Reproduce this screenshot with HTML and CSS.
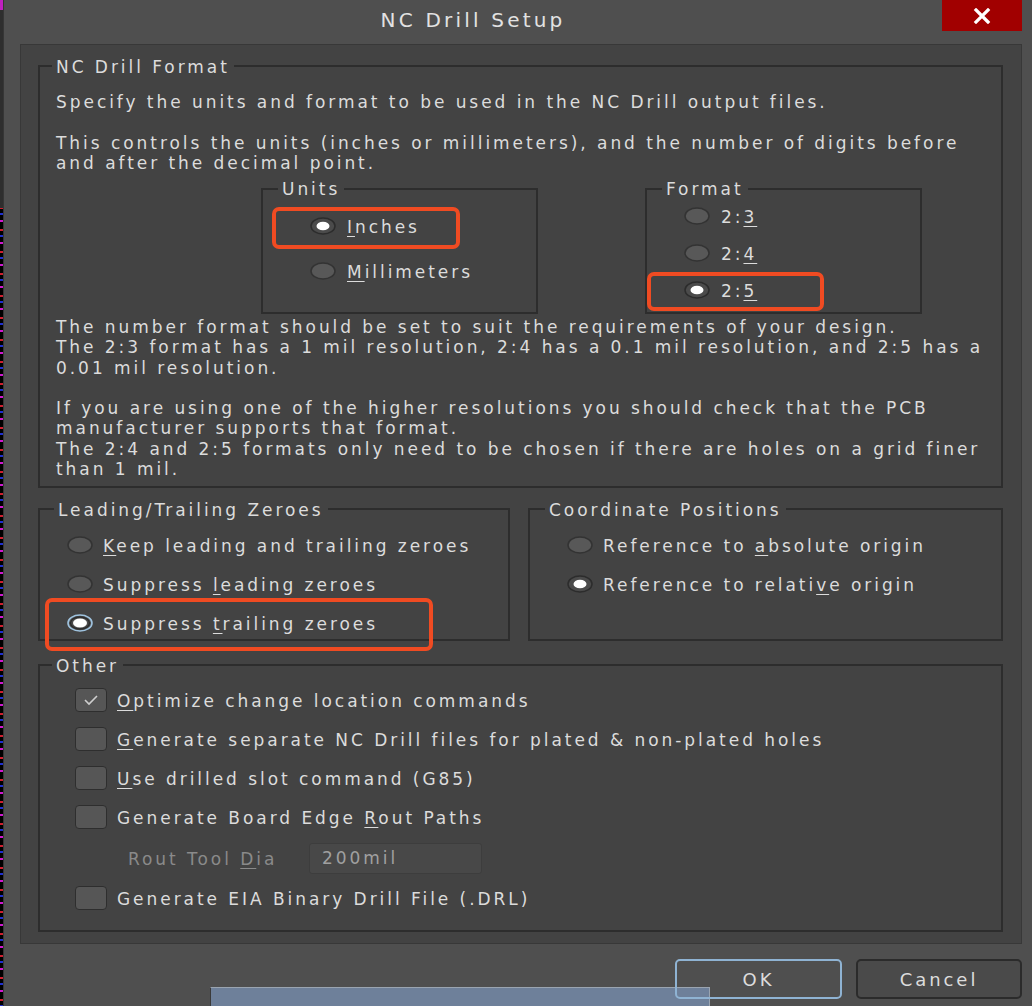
FILE: index.html
```html
<!DOCTYPE html>
<html lang="en">
<head>
<meta charset="utf-8">
<title>NC Drill Setup</title>
<link rel="stylesheet" href="styles.css">
</head>
<body>
<div class="screen">
  <div class="bgstrip"></div>
  <div class="dialog">
    <div class="titlebar">
      <div class="title">NC Drill Setup</div>
      <div class="close">
        <svg width="18" height="16" viewBox="0 0 18 16"><path d="M3 2 L15 14 M15 2 L3 14" stroke="#fff" stroke-width="3.2" stroke-linecap="square"/></svg>
      </div>
    </div>
    <div class="panel">
      <div class="group g-format">
        <span class="legend">NC Drill Format</span>
        <p>Specify the units and format to be used in the NC Drill output files.</p>
        <p class="p2">This controls the units (inches or millimeters), and the number of digits before<br>and after the decimal point.</p>
        <div class="subrow">
          <div class="group g-units">
            <span class="legend">Units</span>
            <div class="opt hl-wrap">
              <svg class="radio" viewBox="0 0 26 18"><ellipse cx="13" cy="9" rx="12" ry="8" fill="#4b4b4b" stroke="#2c2c2c" stroke-width="1.5"/><ellipse cx="13" cy="9" rx="6.5" ry="4.3" fill="#fff"/></svg>
              <span><u>I</u>nches</span>
              <span class="hl hl-inches"></span>
            </div>
            <div class="opt">
              <svg class="radio" viewBox="0 0 26 18"><ellipse cx="13" cy="9" rx="12" ry="8" fill="#585858" stroke="#333" stroke-width="1.5"/></svg>
              <span><u>M</u>illimeters</span>
            </div>
          </div>
          <div class="group g-fmt">
            <span class="legend">Format</span>
            <div class="opt">
              <svg class="radio" viewBox="0 0 26 18"><ellipse cx="13" cy="9" rx="12" ry="8" fill="#585858" stroke="#333" stroke-width="1.5"/></svg>
              <span>2:<u>3</u></span>
            </div>
            <div class="opt">
              <svg class="radio" viewBox="0 0 26 18"><ellipse cx="13" cy="9" rx="12" ry="8" fill="#585858" stroke="#333" stroke-width="1.5"/></svg>
              <span>2:<u>4</u></span>
            </div>
            <div class="opt hl-wrap">
              <svg class="radio" viewBox="0 0 26 18"><ellipse cx="13" cy="9" rx="12" ry="8" fill="#4b4b4b" stroke="#2c2c2c" stroke-width="1.5"/><ellipse cx="13" cy="9" rx="6.5" ry="4.3" fill="#fff"/></svg>
              <span>2:<u>5</u></span>
              <span class="hl hl-25"></span>
            </div>
          </div>
        </div>
        <p class="info">The number format should be set to suit the requirements of your design.<br>The 2:3 format has a 1 mil resolution, 2:4 has a 0.1 mil resolution, and 2:5 has a<br>0.01 mil resolution.<br><br>If you are using one of the higher resolutions you should check that the PCB<br>manufacturer supports that format.<br>The 2:4 and 2:5 formats only need to be chosen if there are holes on a grid finer<br>than 1 mil.</p>
      </div>

      <div class="row2">
        <div class="group g-lead">
          <span class="legend">Leading/Trailing Zeroes</span>
          <div class="opt">
            <svg class="radio" viewBox="0 0 26 18"><ellipse cx="13" cy="9" rx="12" ry="8" fill="#585858" stroke="#333" stroke-width="1.5"/></svg>
            <span><u>K</u>eep leading and trailing zeroes</span>
          </div>
          <div class="opt">
            <svg class="radio" viewBox="0 0 26 18"><ellipse cx="13" cy="9" rx="12" ry="8" fill="#585858" stroke="#333" stroke-width="1.5"/></svg>
            <span>Suppress <u>l</u>eading zeroes</span>
          </div>
          <div class="opt hl-wrap">
            <svg class="radio" viewBox="0 0 26 18"><ellipse cx="13" cy="9" rx="12" ry="8" fill="#4b4b4b" stroke="#9fc3df" stroke-width="1.6"/><ellipse cx="13" cy="9" rx="9.5" ry="6" fill="none" stroke="#2c2c2c" stroke-width="1.4"/><ellipse cx="13" cy="9" rx="7" ry="4.6" fill="#fff"/></svg>
            <span>Suppress <u>t</u>railing zeroes</span>
            <span class="hl hl-trail"></span>
          </div>
        </div>
        <div class="group g-coord">
          <span class="legend">Coordinate Positions</span>
          <div class="opt">
            <svg class="radio" viewBox="0 0 26 18"><ellipse cx="13" cy="9" rx="12" ry="8" fill="#585858" stroke="#333" stroke-width="1.5"/></svg>
            <span>Reference to <u>a</u>bsolute origin</span>
          </div>
          <div class="opt">
            <svg class="radio" viewBox="0 0 26 18"><ellipse cx="13" cy="9" rx="12" ry="8" fill="#4b4b4b" stroke="#2c2c2c" stroke-width="1.5"/><ellipse cx="13" cy="9" rx="6.5" ry="4.3" fill="#fff"/></svg>
            <span>Reference to relati<u>v</u>e origin</span>
          </div>
        </div>
      </div>

      <div class="group g-other">
        <span class="legend">Other</span>
        <div class="opt chk">
          <span class="box"><svg width="32" height="24" viewBox="0 0 32 24"><path d="M10 12 L14 16 L22 8" fill="none" stroke="#cfcfcf" stroke-width="1.6"/></svg></span>
          <span><u>O</u>ptimize change location commands</span>
        </div>
        <div class="opt chk">
          <span class="box"></span>
          <span><u>G</u>enerate separate NC Drill files for plated &amp; non-plated holes</span>
        </div>
        <div class="opt chk">
          <span class="box"></span>
          <span><u>U</u>se drilled slot command (G85)</span>
        </div>
        <div class="opt chk">
          <span class="box"></span>
          <span>Generate Board Edge <u>R</u>out Paths</span>
        </div>
        <div class="rout">
          <span class="rout-label">Rout Tool <u>D</u>ia</span>
          <span class="input">200mil</span>
        </div>
        <div class="opt chk">
          <span class="box"></span>
          <span>Generate EIA Binary Drill File (.DRL)</span>
        </div>
      </div>
    </div>
    <div class="buttons">
      <div class="btn btn-ok">OK</div>
      <div class="btn btn-cancel">Cancel</div>
    </div>
  </div>
  <div class="taskwin"></div>
</div>
</body>
</html>
```
FILE: styles.css
```css
* { box-sizing: border-box; }
html, body { margin: 0; padding: 0; }
body {
  width: 1032px;
  height: 1006px;
  overflow: hidden;
  background: #000;
  font-family: "DejaVu Sans", "Open Sans", sans-serif;
  color: #dcdcdc;
  font-size: 17px;
  letter-spacing: 2.95px;
}
.screen {
  display: flex;
  height: 1006px;
  position: relative;
}
.bgstrip {
  flex: none;
  width: 3px;
  background:
    linear-gradient(to bottom, #c020c0 0 10px, #2e2e2e 10px 208px, transparent 208px),
    repeating-linear-gradient(to bottom, #d018d0 0 2px, #000 2px 9px, #d02030 9px 11px, #000 11px 15px, #2030d0 15px 17px, #000 17px 22px);
}
.dialog {
  flex: 1;
  background: #4f4f4f;
  border-left: 1px solid #363636;
  display: flex;
  flex-direction: column;
}
.titlebar {
  height: 44px;
  display: flex;
  align-items: flex-start;
  flex: none;
}
.title {
  flex: 1;
  text-align: center;
  font-size: 20px;
  line-height: 40px;
  letter-spacing: 3.2px;
  color: #e2e2e2;
}
.close {
  width: 80px;
  height: 31px;
  margin-right: 10px;
  background: #a10000;
  display: flex;
  align-items: center;
  justify-content: center;
}
.panel {
  flex: none;
  margin-left: 16px;
  width: 1002px;
  height: 900px;
  background: #434343;
  border: 1px solid #383838;
  padding: 20px 18px 0 17px;
}
.group {
  position: relative;
  border: 2px solid #2d2d2d;
}
.legend {
  position: absolute;
  top: -10px;
  left: 12px;
  padding: 0 4px;
  background: #434343;
  line-height: 20px;
  white-space: nowrap;
}
p { margin: 0; line-height: 20px; white-space: nowrap; }
.g-format { padding: 25px 16px 7px 16px; }
.p2 { margin-top: 21px; }
.subrow {
  display: flex;
  gap: 107px;
  margin-top: 15px;
  padding-left: 205px;
}
.g-units, .g-fmt {
  width: 277px;
  height: 126px;
  display: flex;
  flex-direction: column;
}
.g-units { padding: 24px 0 0 47px; gap: 21px; }
.g-fmt { padding: 14px 0 0 37px; gap: 13px; }
.g-units .legend, .g-fmt .legend { left: 15px; top: -11px; }
.info { margin-top: 3px; line-height: 20.3px; }

.opt {
  display: flex;
  align-items: center;
  height: 24px;
  white-space: nowrap;
}
.opt > span:not(.hl):not(.box) { padding-top: 2px; }
.radio {
  width: 26px;
  height: 18px;
  flex: none;
  margin-right: 11px;
}
u { text-decoration-thickness: 1px; text-underline-offset: 3px; }

.hl-wrap { position: relative; }
.hl {
  position: absolute;
  border: 4px solid #f04b22;
  border-radius: 7px;
}
.hl-inches { left: -38px; top: -7px; width: 188px; height: 42px; }
.hl-25 { left: -37px; top: -6px; width: 177px; height: 39px; }
.hl-trail { left: -22px; top: -13px; width: 388px; height: 53px; }

.row2 {
  display: flex;
  gap: 18px;
  margin-top: 20px;
}
.g-lead, .g-coord {
  height: 133px;
  display: flex;
  flex-direction: column;
  gap: 15px;
  padding-top: 23px;
}
.g-lead { width: 472px; padding-left: 27px; }
.g-coord { width: 475px; padding-left: 37px; }
.g-lead .legend { left: 14px; }
.g-coord .legend { left: 15px; }
.g-lead .radio, .g-coord .radio { margin-right: 10px; }

.g-other {
  margin-top: 23px;
  height: 268px;
  display: flex;
  flex-direction: column;
  gap: 15px;
  padding: 22px 0 0 35px;
}
.g-other .legend { left: 12px; }
.chk { height: 24px; }
.box {
  flex: none;
  width: 32px;
  height: 24px;
  margin-right: 10px;
  border-radius: 4px;
  background: #565656;
  border: 1px solid #2e2e2e;
  display: flex;
}
.box svg { margin: -1px; }
.rout {
  display: flex;
  align-items: center;
  height: 31px;
  margin-top: -1px;
  margin-bottom: -3px;
  padding-left: 53px;
}
.rout-label {
  width: 181px;
  color: #8a8a8a;
}
.input {
  width: 173px;
  height: 31px;
  background: #484848;
  border: 1px solid #3d3d3d;
  border-radius: 3px;
  color: #a0a0a0;
  padding-left: 12px;
  line-height: 29px;
}

.buttons {
  display: flex;
  justify-content: flex-end;
  gap: 14px;
  margin-top: 15px;
  padding-right: 10px;
}
.btn {
  position: relative;
  z-index: 2;
  height: 40px;
  border-radius: 5px;
  display: flex;
  align-items: center;
  justify-content: center;
  font-size: 18px;
}
.btn-ok { width: 167px; border: 2px solid #8fb3d3; }
.btn-cancel { width: 166px; border: 2px solid #2b2b2b; background: #4a4a4a; }
.taskwin {
  position: absolute;
  left: 210px;
  top: 987px;
  width: 500px;
  height: 30px;
  background: #6e809a;
  border: 1px solid #9aa4b0;
  border-left-color: #3a3a3a;
  z-index: 1;
}
```
